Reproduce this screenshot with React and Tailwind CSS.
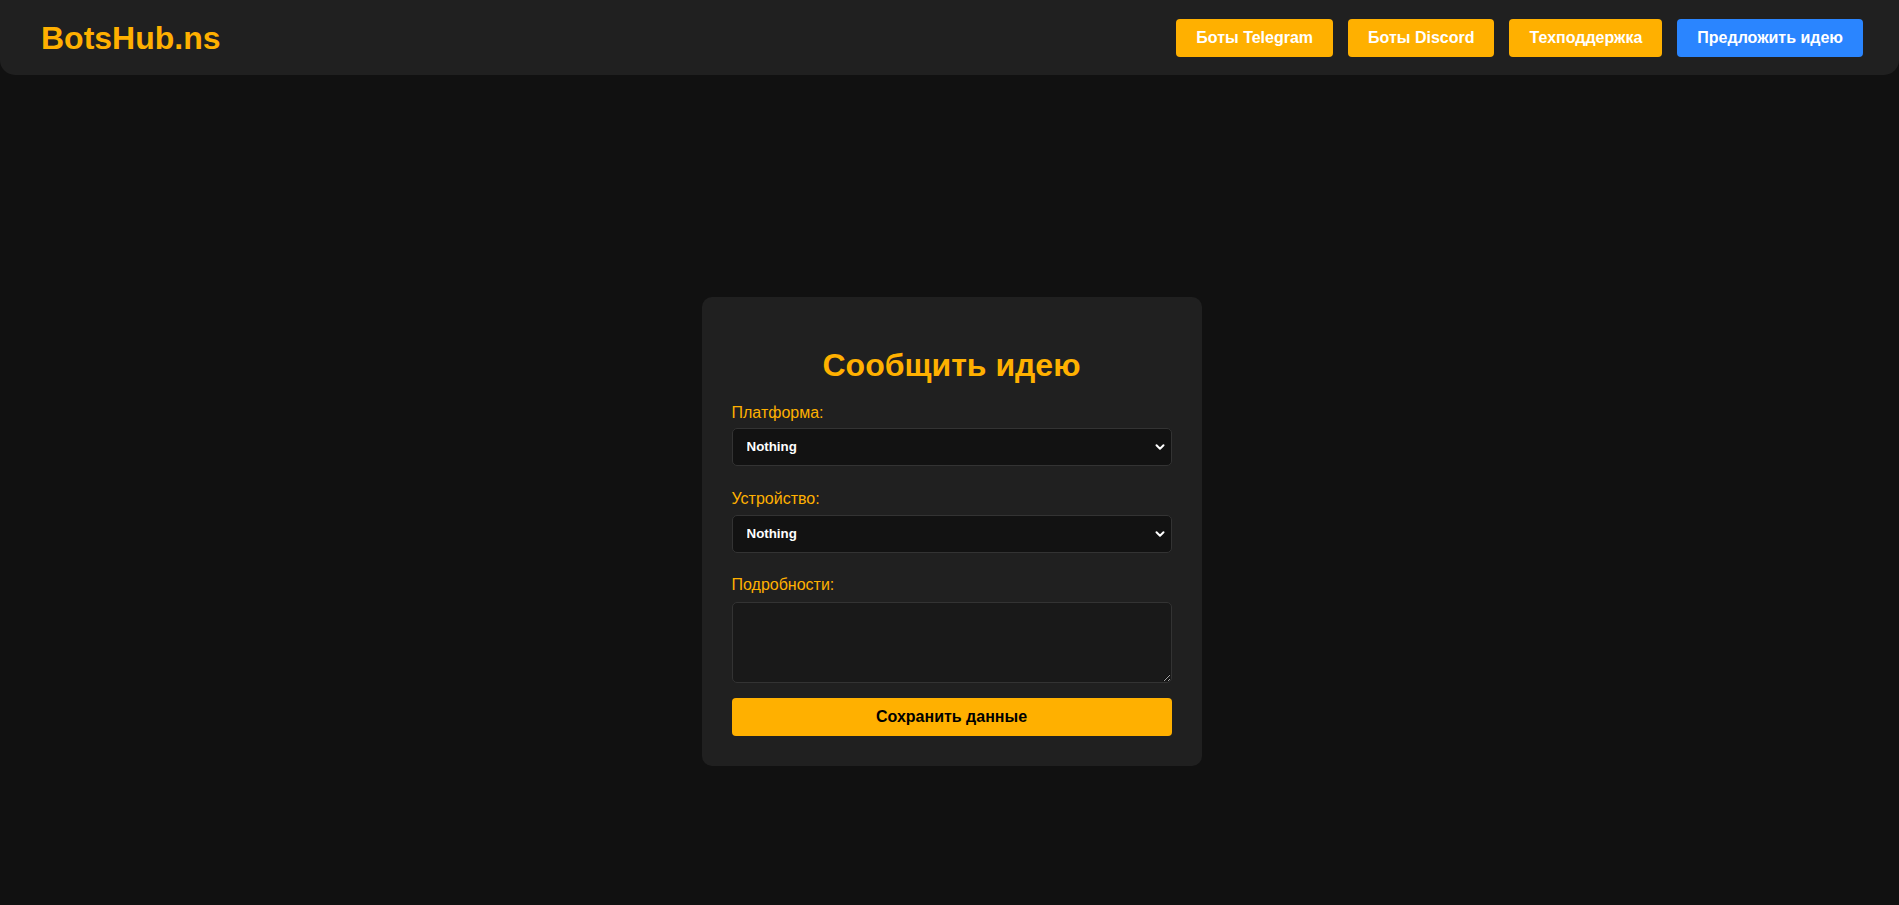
import { useState } from "react";

const links = [
  { label: "Боты Telegram", color: "bg-[#ffb000]" },
  { label: "Боты Discord", color: "bg-[#ffb000]" },
  { label: "Техподдержка", color: "bg-[#ffb000]" },
  { label: "Предложить идею", color: "bg-[#2a85ff]" },
];

function Chevron() {
  return (
    <svg className="pointer-events-none absolute right-[7px] top-1/2 h-[10px] w-[10px] -translate-y-1/2" viewBox="0 0 10 10" fill="none">
      <path d="M1.5 3.2 5 6.7 8.5 3.2" stroke="#fff" strokeWidth="2" strokeLinecap="round" strokeLinejoin="round" />
    </svg>
  );
}

function Select({ value, onChange }) {
  return (
    <div className="relative">
      <select
        value={value}
        onChange={(e) => onChange(e.target.value)}
        className="block h-[38px] w-full appearance-none rounded-[5px] border border-[#333] bg-[#121212] pl-[14px] text-[13.33px] font-bold text-white outline-none"
      >
        <option>Nothing</option>
        <option>Telegram</option>
        <option>Discord</option>
      </select>
      <Chevron />
    </div>
  );
}

export default function App() {
  const [platform, setPlatform] = useState("Nothing");
  const [device, setDevice] = useState("Nothing");

  return (
    <div className="min-h-screen bg-[#111111] font-['Liberation_Sans',Arial,sans-serif]">
      <header className="flex h-[75px] items-center justify-between rounded-b-[15px] bg-[#202020] pl-[41px] pr-[36px]">
        <span className="text-[32px] font-bold text-[#ffb000]">BotsHub.ns</span>
        <nav className="flex gap-[15px]">
          {links.map(({ label, color }) => (
            <button key={label} className={`h-[38px] rounded-[4px] px-5 text-base font-bold text-white ${color}`}>
              {label}
            </button>
          ))}
        </nav>
      </header>

      <main className="flex justify-center pt-[222px] pb-[139px] pl-[4px]">
        <form className="w-[500px] rounded-[10px] bg-[#202020] px-[30px] pt-[50px] pb-[30px]" onSubmit={(e) => e.preventDefault()}>
          <h1 className="text-center text-[32px] font-bold leading-[37px] text-[#ffb000]">Сообщить идею</h1>

          <label className="mt-[20px] mb-[6px] block text-base leading-[18px] text-[#ffb000]">Платформа:</label>
          <Select value={platform} onChange={setPlatform} />

          <label className="mt-[24px] mb-[7px] block text-base leading-[18px] text-[#ffb000]">Устройство:</label>
          <Select value={device} onChange={setDevice} />

          <label className="mt-[23px] mb-[8px] block text-base leading-[18px] text-[#ffb000]">Подробности:</label>
          <textarea className="block h-[81px] w-full rounded-[5px] border border-[#333] bg-[#191919] p-2 text-sm text-white outline-none" />

          <button type="submit" className="mt-[15px] h-[38px] w-full rounded-[4px] bg-[#ffb000] text-base font-bold text-black">
            Сохранить данные
          </button>
        </form>
      </main>
    </div>
  );
}
